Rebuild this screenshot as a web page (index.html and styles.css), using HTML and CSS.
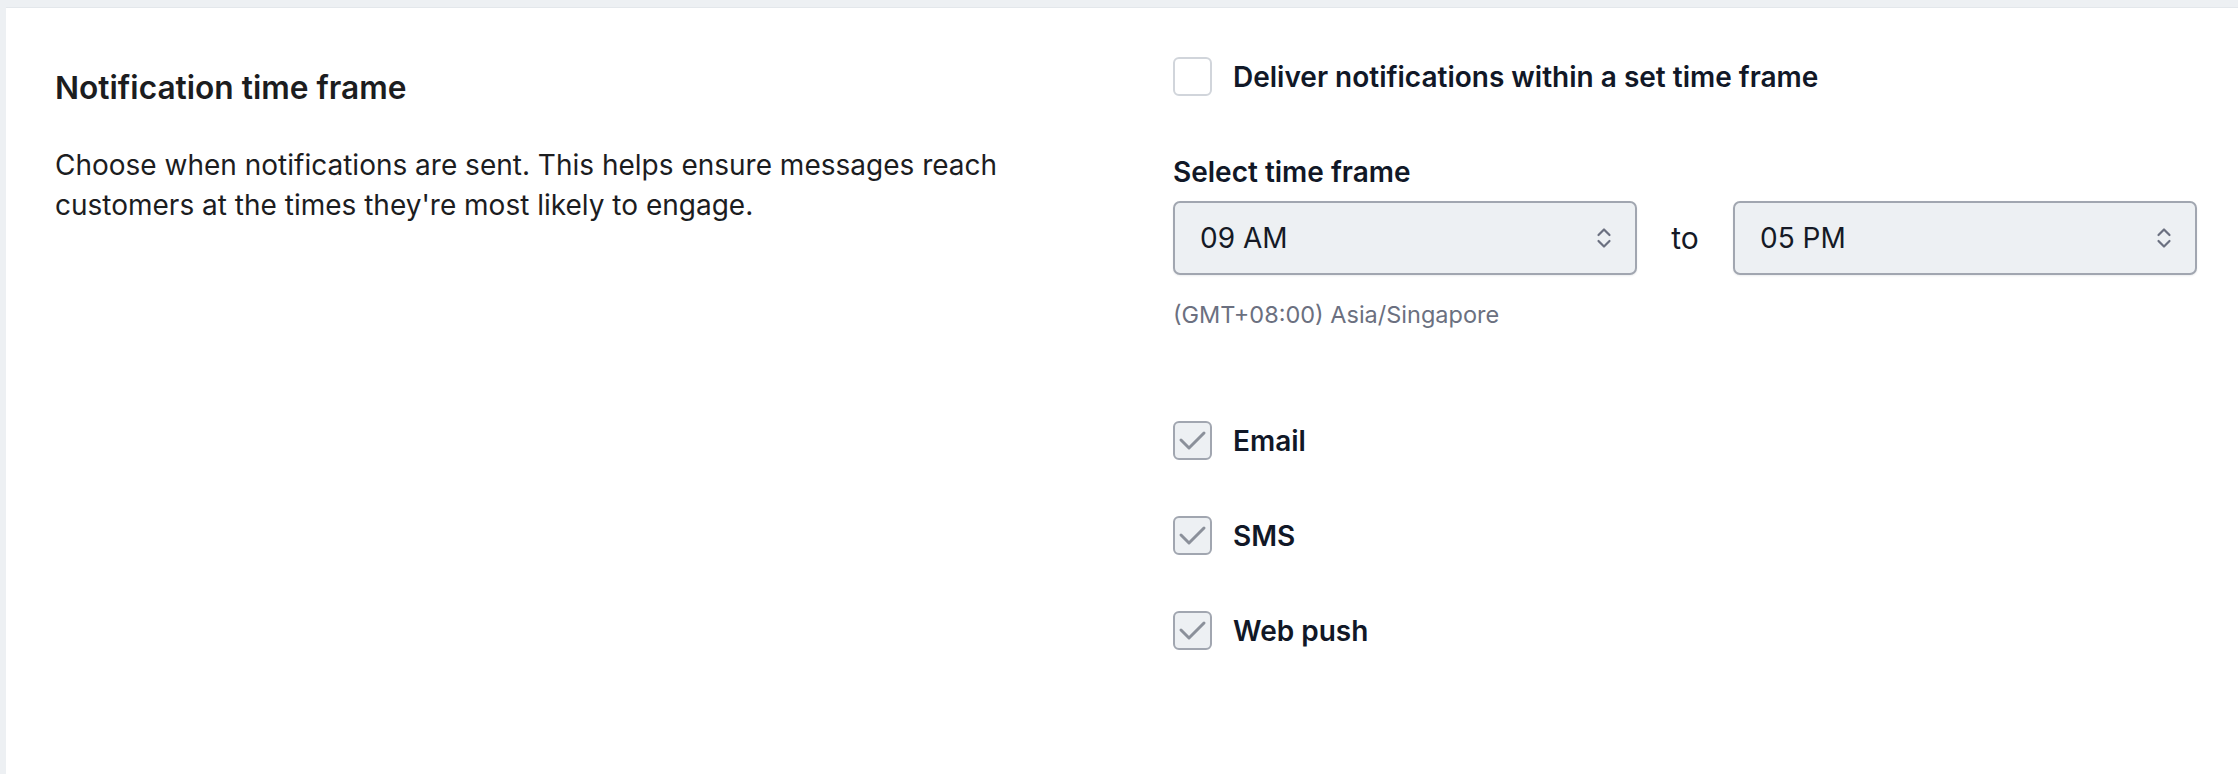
FILE: index.html
```html
<!DOCTYPE html>
<html lang="en">
   <head>
      <meta charset="utf-8">
      <meta name="viewport" content="width=device-width, initial-scale=1">
      <title>Notification time frame</title>
      <link rel="stylesheet" href="styles.css">
   </head>
   <body>
      <section class="card">
         <div class="intro">
            <h2>Notification time frame</h2>
            <p>Choose when notifications are sent. This helps ensure messages reach customers at the times they're most likely to engage.</p>
         </div>
         <div class="settings">
            <label class="check">
               <span class="box"></span>
               Deliver notifications within a set time frame
            </label>
            <div class="field">
               <div class="field-label">Select time frame</div>
               <div class="range">
                  <div class="select">
                     <span>09 AM</span>
                     <svg width="18" height="28" viewBox="0 0 18 28"><path d="M3.5 11 9 5.5l5.5 5.5M3.5 17 9 22.5l5.5-5.5" fill="none" stroke="#6b7080" stroke-width="2.2" stroke-linecap="round" stroke-linejoin="round"/></svg>
                  </div>
                  <span class="to">to</span>
                  <div class="select">
                     <span>05 PM</span>
                     <svg width="18" height="28" viewBox="0 0 18 28"><path d="M3.5 11 9 5.5l5.5 5.5M3.5 17 9 22.5l5.5-5.5" fill="none" stroke="#6b7080" stroke-width="2.2" stroke-linecap="round" stroke-linejoin="round"/></svg>
                  </div>
               </div>
               <div class="hint">(GMT+08:00) Asia/Singapore</div>
            </div>
            <div class="channels">
               <label class="check">
                  <span class="box checked"><svg width="35" height="35" viewBox="0 0 35 35"><path d="M6 17l8 8 15-15" fill="none" stroke="#8b909a" stroke-width="3" stroke-linecap="round" stroke-linejoin="round"/></svg></span>
                  Email
               </label>
               <label class="check">
                  <span class="box checked"><svg width="35" height="35" viewBox="0 0 35 35"><path d="M6 17l8 8 15-15" fill="none" stroke="#8b909a" stroke-width="3" stroke-linecap="round" stroke-linejoin="round"/></svg></span>
                  SMS
               </label>
               <label class="check">
                  <span class="box checked"><svg width="35" height="35" viewBox="0 0 35 35"><path d="M6 17l8 8 15-15" fill="none" stroke="#8b909a" stroke-width="3" stroke-linecap="round" stroke-linejoin="round"/></svg></span>
                  Web push
               </label>
            </div>
         </div>
      </section>
   </body>
</html>
```

FILE: styles.css
```css
html, body {
   height: 100%;
}
body {
   margin: 0;
   background-color: #edf0f3;
   font-family: Inter, "Noto Sans", sans-serif;
   color: #1c1d1f;
}
.card {
   display: grid;
   grid-template-columns: 1024px 1fr;
   column-gap: 94px;
   box-sizing: border-box;
   min-height: calc(100% - 7px);
   margin: 7px 0 0 6px;
   padding: 49px 41px 0 49px;
   background-color: white;
   border-top: 1px solid #e3e7eb;
}
.intro h2 {
   margin: 11px 0 0;
   font-size: 31.7px;
   line-height: 40px;
   font-weight: 600;
}
.intro p {
   margin: 37px 0 0;
   font-size: 28px;
   line-height: 40px;
}
.settings {
   color: #111827;
}
.check {
   display: flex;
   align-items: center;
   gap: 21px;
   font-size: 28px;
   font-weight: 600;
}
.box {
   display: flex;
   align-items: center;
   justify-content: center;
   box-sizing: border-box;
   width: 39px;
   height: 39px;
   border: 2px solid #d1d5db;
   border-radius: 6px;
   background-color: white;
}
.box.checked {
   border-color: #a1a6b0;
   background-color: #edf0f3;
}
.field {
   margin-top: 60px;
}
.field-label {
   font-size: 28px;
   line-height: 32px;
   font-weight: 600;
}
.range {
   display: grid;
   grid-template-columns: 1fr 96px 1fr;
   align-items: center;
   margin-top: 13px;
}
.select {
   display: flex;
   align-items: center;
   justify-content: space-between;
   box-sizing: border-box;
   height: 74px;
   padding: 0 22px 0 25px;
   border: 2px solid #a1a6b0;
   border-radius: 7px;
   background-color: #edf0f3;
   box-shadow: 0 1px 2px rgba(16, 24, 40, 0.08);
   font-size: 28px;
   color: #151a26;
}
.to {
   text-align: center;
   font-size: 30px;
   color: #151a26;
}
.hint {
   margin-top: 26px;
   font-size: 23.5px;
   line-height: 28px;
   color: #6b7080;
}
.channels {
   display: flex;
   flex-direction: column;
   gap: 56px;
   margin-top: 92px;
}
```
